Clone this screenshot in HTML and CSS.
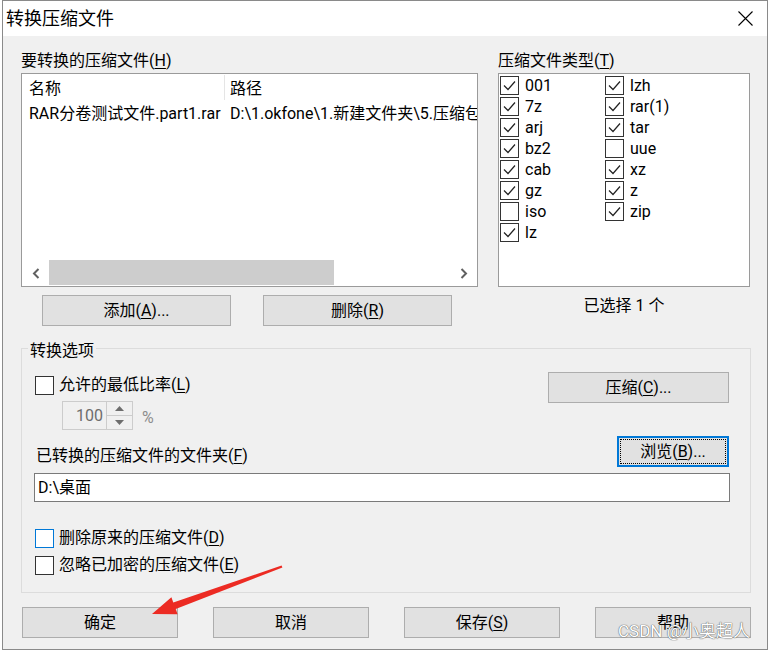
FILE: index.html
```html
<!DOCTYPE html>
<html lang="zh-CN">
<head>
<meta charset="utf-8">
<title>转换压缩文件</title>
<link rel="stylesheet" href="styles.css">
</head>
<body>
<div class="window">
  <div class="titlebar">
    <span class="title">转换压缩文件</span>
    <svg class="close" viewBox="0 0 15 15"><path d="M0.5 0.5 L14.5 14.5 M14.5 0.5 L0.5 14.5" stroke="#000" stroke-width="1.1" fill="none"/></svg>
  </div>
  <div class="content">
    <div class="top">
      <div class="left">
        <div class="label">要转换的压缩文件(<u>H</u>)</div>
        <div class="listview">
          <div class="lv-header">
            <div class="col c1">名称</div>
            <div class="col c2">路径</div>
          </div>
          <div class="lv-row">
            <div class="col c1">RAR分卷测试文件.part1.rar</div>
            <div class="col c2">D:\1.okfone\1.新建文件夹\5.压缩包</div>
          </div>
          <div class="lv-spacer"></div>
          <div class="hscroll">
            <div class="sb-btn"><svg viewBox="0 0 8 11" class="chev"><path d="M6.5 1 L2 5.5 L6.5 10" stroke="#606060" stroke-width="2" fill="none"/></svg></div>
            <div class="sb-track"><div class="sb-thumb"></div></div>
            <div class="sb-btn"><svg viewBox="0 0 8 11" class="chev"><path d="M1.5 1 L6 5.5 L1.5 10" stroke="#606060" stroke-width="2" fill="none"/></svg></div>
          </div>
        </div>
        <div class="btnrow">
          <button class="btn btn-wide">添加(<u>A</u>)...</button>
          <button class="btn btn-wide">删除(<u>R</u>)</button>
        </div>
      </div>
      <div class="right">
        <div class="label">压缩文件类型(<u>T</u>)</div>
        <div class="typelist">
          <div class="ck"><span class="box on"><svg viewBox="0 0 17 17"><path d="M3 8.5 L7 12.5 L14 4.5"/></svg></span><span>001</span></div>
          <div class="ck"><span class="box on"><svg viewBox="0 0 17 17"><path d="M3 8.5 L7 12.5 L14 4.5"/></svg></span><span>7z</span></div>
          <div class="ck"><span class="box on"><svg viewBox="0 0 17 17"><path d="M3 8.5 L7 12.5 L14 4.5"/></svg></span><span>arj</span></div>
          <div class="ck"><span class="box on"><svg viewBox="0 0 17 17"><path d="M3 8.5 L7 12.5 L14 4.5"/></svg></span><span>bz2</span></div>
          <div class="ck"><span class="box on"><svg viewBox="0 0 17 17"><path d="M3 8.5 L7 12.5 L14 4.5"/></svg></span><span>cab</span></div>
          <div class="ck"><span class="box on"><svg viewBox="0 0 17 17"><path d="M3 8.5 L7 12.5 L14 4.5"/></svg></span><span>gz</span></div>
          <div class="ck"><span class="box"></span><span>iso</span></div>
          <div class="ck"><span class="box on"><svg viewBox="0 0 17 17"><path d="M3 8.5 L7 12.5 L14 4.5"/></svg></span><span>lz</span></div>
          <div class="ck"><span class="box on"><svg viewBox="0 0 17 17"><path d="M3 8.5 L7 12.5 L14 4.5"/></svg></span><span>lzh</span></div>
          <div class="ck"><span class="box on"><svg viewBox="0 0 17 17"><path d="M3 8.5 L7 12.5 L14 4.5"/></svg></span><span>rar(1)</span></div>
          <div class="ck"><span class="box on"><svg viewBox="0 0 17 17"><path d="M3 8.5 L7 12.5 L14 4.5"/></svg></span><span>tar</span></div>
          <div class="ck"><span class="box"></span><span>uue</span></div>
          <div class="ck"><span class="box on"><svg viewBox="0 0 17 17"><path d="M3 8.5 L7 12.5 L14 4.5"/></svg></span><span>xz</span></div>
          <div class="ck"><span class="box on"><svg viewBox="0 0 17 17"><path d="M3 8.5 L7 12.5 L14 4.5"/></svg></span><span>z</span></div>
          <div class="ck"><span class="box on"><svg viewBox="0 0 17 17"><path d="M3 8.5 L7 12.5 L14 4.5"/></svg></span><span>zip</span></div>
        </div>
        <div class="selcount">已选择 1 个</div>
      </div>
    </div>

    <fieldset class="group">
      <legend>转换选项</legend>
      <div class="row-a">
        <div class="row-a-left">
          <div class="gck"><span class="box"></span><span>允许的最低比率(<u>L</u>)</span></div>
          <div class="spinrow">
            <div class="spin">
              <span class="spin-val">100</span>
              <div class="spin-btns">
                <div class="sbx up"><svg viewBox="0 0 9 5"><path d="M0 5 L4.5 0 L9 5 Z" fill="#6d6d6d"/></svg></div>
                <div class="sbx"><svg viewBox="0 0 9 5"><path d="M0 0 L4.5 5 L9 0 Z" fill="#6d6d6d"/></svg></div>
              </div>
            </div>
            <span class="pct">%</span>
          </div>
        </div>
        <button class="btn btn-compress">压缩(<u>C</u>)...</button>
      </div>
      <div class="row-c">
        <div class="flabel">已转换的压缩文件的文件夹(<u>F</u>)</div>
        <button class="btn btn-browse">浏览(<u>B</u>)...</button>
      </div>
      <div class="input">D:\桌面</div>
      <div class="gck gck-d"><span class="box blue"></span><span>删除原来的压缩文件(<u>D</u>)</span></div>
      <div class="gck gck-e"><span class="box"></span><span>忽略已加密的压缩文件(<u>E</u>)</span></div>
    </fieldset>

    <div class="footer">
      <button class="btn btn-foot">确定</button>
      <button class="btn btn-foot">取消</button>
      <button class="btn btn-foot">保存(<u>S</u>)</button>
      <button class="btn btn-foot btn-help">帮助</button>
    </div>
  </div>
</div>

<svg class="arrow" viewBox="0 0 771 652" width="771" height="652">
  <polygon points="152,614 177.6,614.2 175.7,609 282.4,567.4 281.6,565.6 173.3,602.4 171.4,597.2" fill="#ec2b23"/>
</svg>
<div class="watermark">CSDN @小奥超人</div>
</body>
</html>
```

FILE: styles.css
```css
* { box-sizing: border-box; }
html, body { margin: 0; padding: 0; }
body {
  width: 771px;
  height: 652px;
  position: relative;
  overflow: hidden;
  background: #fff;
  font-family: Roboto, "Noto Sans CJK SC", sans-serif;
  font-size: 16px;
  color: #000;
}
u { text-decoration: underline; text-underline-offset: 2px; text-decoration-thickness: 1px; }

.window {
  margin-left: 2px;
  width: 766px;
  height: 650px;
  border: 1px solid #8a8a8a;
  background: #f0f0f0;
  display: flex;
  flex-direction: column;
}
.titlebar {
  flex: none;
  height: 35px;
  background: #fff;
  display: flex;
  align-items: center;
  justify-content: space-between;
  padding: 0 14px 0 3px;
}
.title { font-size: 18px; line-height: 24px; }
.close { width: 15px; height: 15px; display: block; }

.content { flex: 1; padding: 14px 16px 0 18px; }

.top { display: flex; gap: 20px; }
.left { width: 457px; }
.right { width: 252px; }
.label { height: 20px; line-height: 22px; margin-bottom: 3px; white-space: nowrap; }

.listview {
  height: 214px;
  border: 1px solid #9a9a9a;
  background: #fff;
  display: flex;
  flex-direction: column;
  overflow: hidden;
}
.lv-header { flex: none; height: 27px; display: flex; align-items: flex-start; }
.lv-header .col { margin-top: 1px; height: 25px; padding-top: 3px; line-height: 22px; }
.lv-row { flex: none; display: flex; line-height: 25px; height: 24px; }
.col { white-space: nowrap; overflow: hidden; }
.c1 { width: 203px; flex: none; padding-left: 7px; border-right: 1px solid transparent; }
.lv-header .c1 { border-right-color: #e5e5e5; }
.c2 { flex: 1; padding-left: 5px; }
.lv-spacer { flex: 1; }
.hscroll { flex: none; height: 26px; display: flex; background: #fff; }
.sb-btn { width: 27px; display: flex; align-items: center; justify-content: center; }
.chev { width: 8px; height: 11px; display: block; }
.sb-track { flex: 1; display: flex; }
.sb-thumb { width: 285px; height: 25px; background: #cdcdcd; }

.btnrow { display: flex; gap: 32px; padding-left: 21px; margin-top: 8px; }
.btn {
  font: inherit;
  color: #000;
  background: #e1e1e1;
  border: 1px solid #adadad;
  height: 31px;
  padding: 0;
  line-height: 30px;
  text-align: center;
  white-space: nowrap;
}
.btn-wide { width: 189px; }

.typelist {
  height: 214px;
  border: 1px solid #9a9a9a;
  background: #fff;
  padding: 1px 0 0 1px;
  display: grid;
  grid-template-columns: 105px 1fr;
  grid-template-rows: repeat(8, 21px);
  grid-auto-flow: column;
  align-content: start;
}
.ck { display: flex; align-items: center; gap: 6px; line-height: 23px; white-space: nowrap; }
.box {
  flex: none;
  width: 19px;
  height: 19px;
  border: 1px solid #333;
  background: #fff;
  display: block;
}
.box svg { width: 17px; height: 17px; display: block; }
.box svg path { fill: none; stroke: #222; stroke-width: 1.2; }
.box.blue { border-color: #0078d7; }
.selcount { margin-top: 8px; line-height: 22px; height: 20px; text-align: center; }

.group {
  margin: 12px 0 0 0;
  padding: 0 21px 17px 13px;
  border: 1px solid #dcdcdc;
  min-width: 0;
}
.group legend {
  margin-left: -7px;
  padding: 4px 2px 0;
  line-height: 17px;
}
.row-a { display: flex; justify-content: space-between; align-items: flex-start; margin-top: 12px; }
.row-a-left { padding-top: 4px; }
.gck { display: flex; align-items: center; gap: 5px; height: 20px; line-height: 22px; white-space: nowrap; }
.spinrow { display: flex; align-items: center; gap: 9px; margin: 6px 0 0 27px; }
.spin { width: 71px; height: 29px; border: 1px solid #cccccc; display: flex; background: #f0f0f0; }
.spin-val { flex: 1; text-align: right; padding-right: 3px; color: #6d6d6d; line-height: 28px; }
.spin-btns { width: 26px; display: flex; flex-direction: column; border-left: 1px solid #cccccc; }
.sbx { flex: 1; display: flex; align-items: center; justify-content: center; }
.sbx.up { border-bottom: 1px solid #cccccc; }
.sbx svg { width: 9px; height: 5px; display: block; }
.pct { color: #8d8d8d; line-height: 20px; padding-top: 5px; }
.btn-compress { width: 181px; margin-top: 1px; }

.row-c { display: flex; justify-content: space-between; align-items: flex-end; margin-top: 6px; }
.flabel { line-height: 22px; padding-left: 1px; white-space: nowrap; }
.btn-browse {
  width: 112px;
  border: 2px solid #0078d7;
  outline: 1px dotted #000;
  outline-offset: -4px;
  line-height: 27px;
}
.input {
  margin: 6px -1px 0 -1px;
  height: 29px;
  border: 1px solid #7a7a7a;
  background: #fff;
  padding-left: 3px;
  line-height: 28px;
}
.gck-d { margin-top: 26px; }
.gck-e { margin-top: 7px; }

.footer { display: flex; justify-content: space-between; margin-top: 14px; padding-left: 1px; }
.btn-foot { width: 156px; }
.btn-help { line-height: 26px; }

.arrow { position: absolute; left: 0; top: 0; pointer-events: none; }
.watermark {
  position: absolute;
  left: 618px;
  top: 620px;
  font-size: 17px;
  line-height: 22px;
  color: #fff;
  text-shadow: 0 0 1px #555, 0 0 1px #555;
  white-space: nowrap;
}
```
